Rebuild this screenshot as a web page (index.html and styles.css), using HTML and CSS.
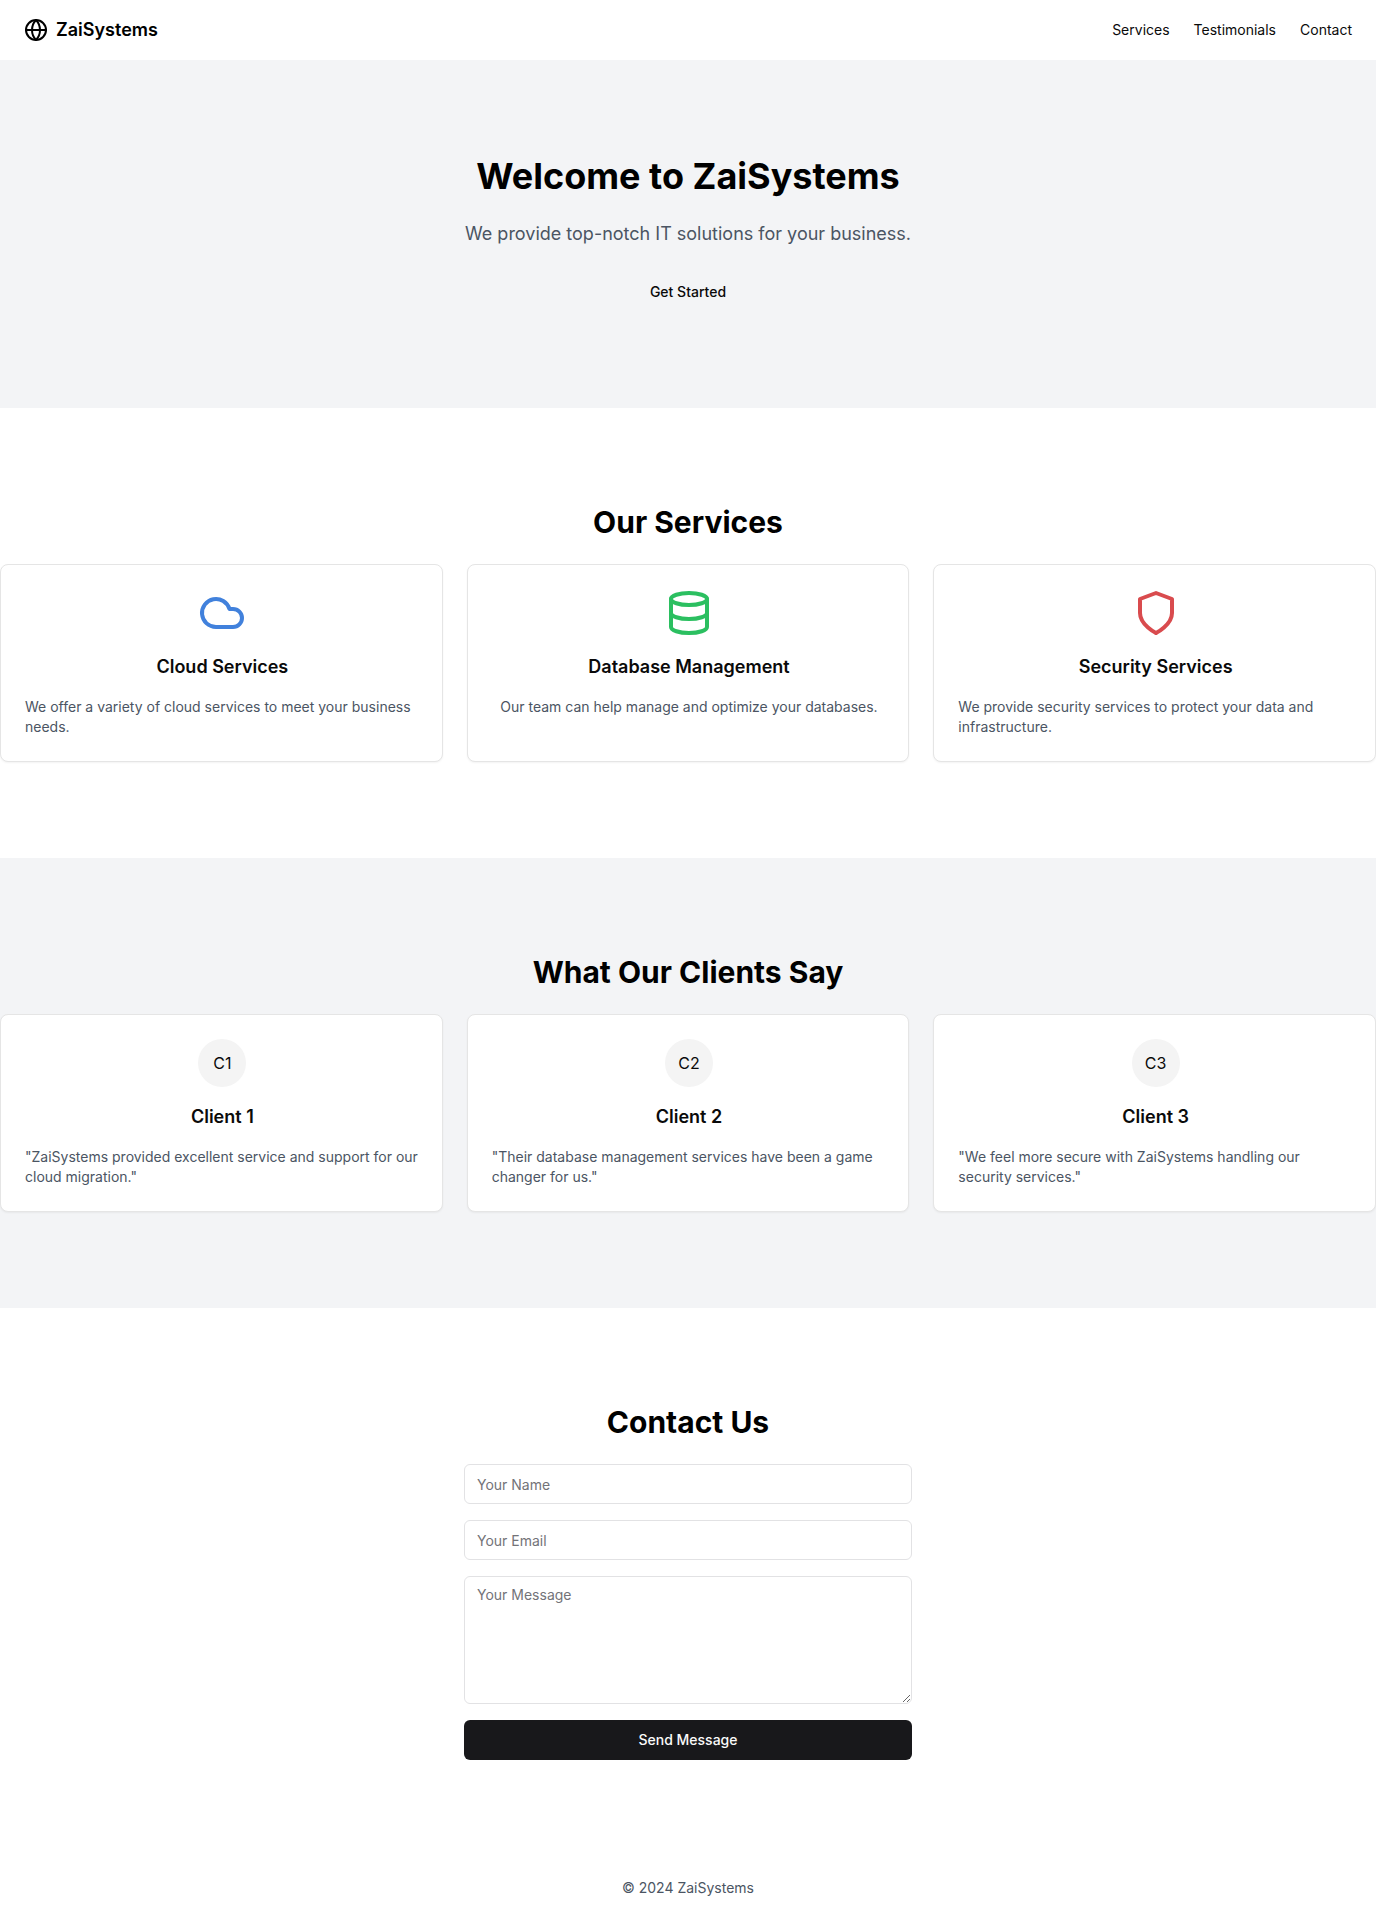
FILE: index.html
```html
<!DOCTYPE html>
<html lang="en">
<head>
  <meta charset="utf-8">
  <meta name="viewport" content="width=device-width, initial-scale=1">
  <title>ZaiSystems</title>
  <link rel="stylesheet" href="styles.css">
</head>
<body>
  <header class="header">
    <a class="brand" href="#">
      <svg class="icon brand-icon" viewBox="0 0 24 24" aria-hidden="true"><circle cx="12" cy="12" r="10"/><path d="M12 2a14.5 14.5 0 0 0 0 20 14.5 14.5 0 0 0 0-20"/><path d="M2 12h20"/></svg>
      <span>ZaiSystems</span>
    </a>
    <nav class="nav">
      <a href="#services">Services</a>
      <a href="#testimonials">Testimonials</a>
      <a href="#contact">Contact</a>
    </nav>
  </header>

  <main>
    <section class="section section-muted hero">
      <h1 class="hero-title">Welcome to ZaiSystems</h1>
      <p class="hero-text">We provide top-notch IT solutions for your business.</p>
      <button class="button" type="button">Get Started</button>
    </section>

    <section class="section" id="services">
      <h2 class="section-title">Our Services</h2>
      <div class="cards">
        <article class="card">
          <svg class="icon card-icon icon-blue" viewBox="0 0 24 24" aria-hidden="true"><path d="M17.5 19H9a7 7 0 1 1 6.71-9h1.79a4.5 4.5 0 1 1 0 9Z"/></svg>
          <h3 class="card-title">Cloud Services</h3>
          <p class="card-text">We offer a variety of cloud services to meet your business needs.</p>
        </article>
        <article class="card">
          <svg class="icon card-icon icon-green" viewBox="0 0 24 24" aria-hidden="true"><ellipse cx="12" cy="5" rx="9" ry="3"/><path d="M3 5v14a9 3 0 0 0 18 0V5"/><path d="M3 12a9 3 0 0 0 18 0"/></svg>
          <h3 class="card-title">Database Management</h3>
          <p class="card-text">Our team can help manage and optimize your databases.</p>
        </article>
        <article class="card">
          <svg class="icon card-icon icon-red" viewBox="0 0 24 24" aria-hidden="true"><path d="M12 22s8-4 8-10V5l-8-3-8 3v7c0 6 8 10 8 10"/></svg>
          <h3 class="card-title">Security Services</h3>
          <p class="card-text">We provide security services to protect your data and infrastructure.</p>
        </article>
      </div>
    </section>

    <section class="section section-muted" id="testimonials">
      <h2 class="section-title">What Our Clients Say</h2>
      <div class="cards">
        <article class="card">
          <span class="avatar">C1</span>
          <h3 class="card-title">Client 1</h3>
          <p class="card-text">"ZaiSystems provided excellent service and support for our cloud migration."</p>
        </article>
        <article class="card">
          <span class="avatar">C2</span>
          <h3 class="card-title">Client 2</h3>
          <p class="card-text">"Their database management services have been a game changer for us."</p>
        </article>
        <article class="card">
          <span class="avatar">C3</span>
          <h3 class="card-title">Client 3</h3>
          <p class="card-text">"We feel more secure with ZaiSystems handling our security services."</p>
        </article>
      </div>
    </section>

    <section class="section" id="contact">
      <h2 class="section-title">Contact Us</h2>
      <form class="form">
        <input class="field" type="text" name="name" placeholder="Your Name" aria-label="Your Name">
        <input class="field" type="email" name="email" placeholder="Your Email" aria-label="Your Email">
        <textarea class="field field-message" name="message" placeholder="Your Message" aria-label="Your Message"></textarea>
        <button class="button button-primary" type="submit">Send Message</button>
      </form>
    </section>
  </main>

  <footer class="footer">© 2024 ZaiSystems</footer>
</body>
</html>
```

FILE: styles.css
```css
*,
*::before,
*::after {
  box-sizing: border-box;
}

body {
  margin: 0;
  background: #fff;
  color: #0a0a0a;
  font-family: Inter, "Liberation Sans", sans-serif;
  font-size: 14px;
  line-height: 20px;
}

h1,
h2,
h3,
p {
  margin: 0;
}

a {
  color: inherit;
  text-decoration: none;
}

.icon {
  fill: none;
  stroke: currentColor;
  stroke-width: 2;
  stroke-linecap: round;
  stroke-linejoin: round;
}

.header {
  display: flex;
  align-items: center;
  justify-content: space-between;
  padding: 16px 24px;
}

.brand {
  display: flex;
  align-items: center;
  gap: 8px;
  color: #000;
  font-size: 18px;
  font-weight: 600;
  line-height: 28px;
}

.brand-icon {
  width: 24px;
  height: 24px;
}

.nav {
  display: flex;
  gap: 24px;
}

.section {
  display: flex;
  flex-direction: column;
  align-items: center;
  gap: 24px;
  padding: 96px 0;
}

.section-muted {
  background: #f3f4f6;
}

.hero {
  text-align: center;
}

.hero-title {
  color: #000;
  font-size: 36px;
  font-weight: 700;
  line-height: 40px;
}

.hero-text {
  color: #4b5563;
  font-size: 18px;
  line-height: 28px;
}

.section-title {
  color: #000;
  font-size: 30px;
  font-weight: 700;
  line-height: 36px;
}

.cards {
  display: grid;
  grid-template-columns: repeat(3, 1fr);
  gap: 24px;
  width: 100%;
}

.card {
  display: flex;
  flex-direction: column;
  align-items: center;
  gap: 16px;
  padding: 24px 22px 24px 24px;
  border: 1px solid #e5e5e5;
  border-radius: 8px;
  background: #fff;
  box-shadow: 0 1px 2px rgba(0, 0, 0, 0.05);
}

.card-icon {
  width: 48px;
  height: 48px;
}

.icon-blue {
  color: #4181dc;
}

.icon-green {
  color: #2bbf60;
}

.icon-red {
  color: #d94b4e;
}

.card-title {
  font-size: 18px;
  font-weight: 600;
  line-height: 28px;
}

.card-text {
  color: #4b5563;
}

.avatar {
  display: flex;
  align-items: center;
  justify-content: center;
  width: 48px;
  height: 48px;
  border-radius: 50%;
  background: #f4f4f4;
  font-size: 16px;
  line-height: 24px;
}

.form {
  display: flex;
  flex-direction: column;
  gap: 16px;
  width: 100%;
  max-width: 448px;
}

.field {
  width: 100%;
  height: 40px;
  padding: 8px 12px;
  border: 1px solid #e2e2e4;
  border-radius: 6px;
  background: #fff;
  color: inherit;
  font: inherit;
}

.field::placeholder {
  color: #737378;
}

.field-message {
  height: 128px;
  resize: vertical;
}

.button {
  height: 40px;
  padding: 8px 16px;
  border: 0;
  border-radius: 6px;
  background: transparent;
  color: #0a0a0a;
  font: inherit;
  font-weight: 500;
  cursor: pointer;
}

.button-primary {
  background: #18181b;
  color: #fafafa;
}

.footer {
  padding: 22px 24px;
  color: #4b5563;
  text-align: center;
}
```
